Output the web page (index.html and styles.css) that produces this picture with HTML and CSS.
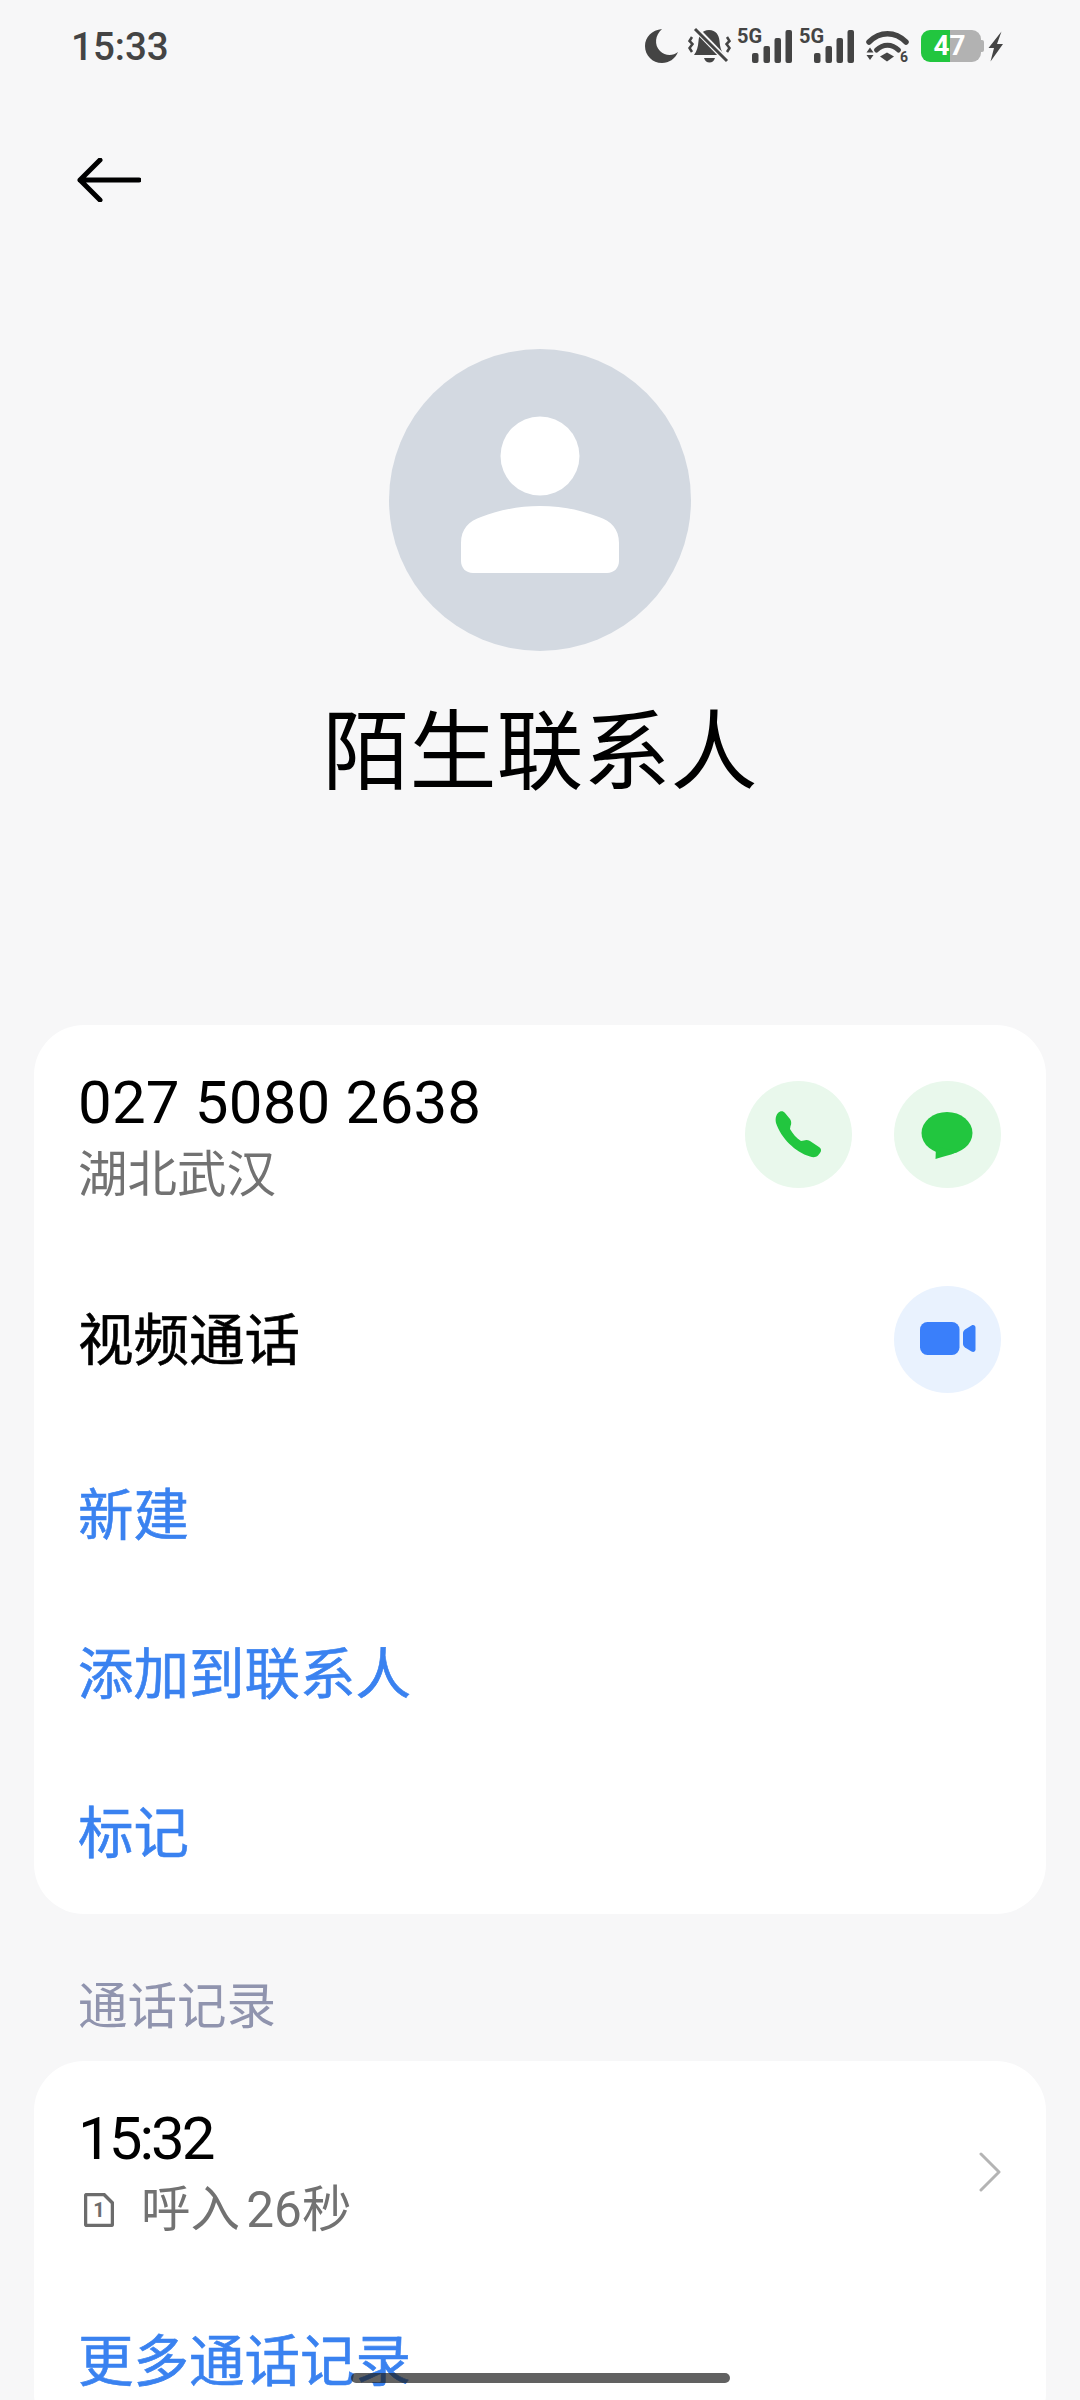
FILE: index.html
```html
<!DOCTYPE html>
<html lang="zh-CN">
<head>
  <meta charset="UTF-8">
  <title>陌生联系人</title>
  <link rel="stylesheet" href="styles.css">
</head>
<body>

<!-- Status bar -->
<header class="status-bar">
  <span class="status-time">15:33</span>
  <div class="status-icons">
    <svg class="icon-moon" viewBox="0 0 33 34"><path d="M17 0 C10 6 9 16 15 22 C20 27 28 27 33 23 C30 30 24 34 17 34 C7.500 34 0 26.500 0 17 C0 8 7 1 17 0 Z" fill="#444"/></svg>
    <svg class="icon-bell" viewBox="0 0 44 40">
      <path d="M21 4 C28 4 31 9 31.500 15 C32 21 33 25 36 29 L6 29 C9 25 10 21 10.500 15 C11 9 14 4 21 4 Z" fill="#444"/>
      <path d="M16 32 L27 32 C26 35 24 36.500 21.500 36.500 C19 36.500 17 35 16 32 Z" fill="#444"/>
      <path d="M6 1 L39 35" stroke="#f7f7f8" stroke-width="6"/>
      <path d="M7 3 L39 35" stroke="#444" stroke-width="3"/>
      <path d="M4 11 L1.500 15 L4.500 18 L1.500 22 L4 26 M39 11 L41.500 15 L38.500 18 L41.500 22 L39 26" fill="none" stroke="#444" stroke-width="2.500"/>
    </svg>
    <svg class="icon-signal" viewBox="0 0 54 36">
      <text class="signal-text" x="-1" y="15">5G</text>
      <rect x="14" y="25" width="6.500" height="10" rx="2" fill="#444"/>
      <rect x="25.500" y="18" width="6.500" height="17" rx="2" fill="#444"/>
      <rect x="36.500" y="10" width="6.500" height="25" rx="2" fill="#444"/>
      <rect x="47.500" y="2" width="6.500" height="33" rx="2" fill="#444"/>
    </svg>
    <svg class="icon-signal signal-second" viewBox="0 0 54 36">
      <text class="signal-text" x="-1" y="15">5G</text>
      <rect x="14" y="25" width="6.500" height="10" rx="2" fill="#444"/>
      <rect x="25.500" y="18" width="6.500" height="17" rx="2" fill="#444"/>
      <rect x="36.500" y="10" width="6.500" height="25" rx="2" fill="#444"/>
      <rect x="47.500" y="2" width="6.500" height="33" rx="2" fill="#444"/>
    </svg>
    <svg class="icon-wifi" viewBox="0 0 43 36">
      <path d="M3 14 C14 3 29 3 40 14" fill="none" stroke="#444" stroke-width="5.500" stroke-linecap="round"/>
      <path d="M10.500 22 C17 15.500 26 15.500 32.500 22" fill="none" stroke="#444" stroke-width="5" stroke-linecap="round"/>
      <path d="M14 28.500 L21 24.500 L28 28.500 L21 33.500 Z" fill="#444"/>
      <path d="M4 19.500 L7.500 24.500 L0.500 24.500 Z M0.500 27 L7.500 27 L4 32 Z" fill="#444"/>
      <text class="wifi-text" x="34" y="34">6</text>
    </svg>
    <div class="battery"><span>47</span></div>
    <svg class="icon-bolt" viewBox="0 0 15 31"><path d="M13.500 0.500 L0.500 17 L6 17 L2.500 30.500 L15 13 L9 13 Z" fill="#444"/></svg>
  </div>
</header>

<main>
  <!-- Back -->
  <div class="top-bar">
    <svg class="icon-back" viewBox="0 0 64 44">
      <path d="M62 22 L3 22 M23 2 L3 22 L23 42" fill="none" stroke="#000" stroke-width="5" stroke-linecap="round" stroke-linejoin="round"/>
    </svg>
  </div>

  <!-- Contact head -->
  <section class="contact-head">
    <svg class="avatar" viewBox="0 0 302 302">
      <circle cx="151" cy="151" r="151" fill="#d3d9e1"/>
      <circle cx="151" cy="107" r="39.500" fill="#fff"/>
      <path d="M72 194 C72 180 80 172 92 168 C110 161 130 157 151 157 C172 157 192 161 210 168 C222 172 230 180 230 194 L230 212 C230 219 225 224 218 224 L84 224 C77 224 72 219 72 212 Z" fill="#fff"/>
    </svg>
    <h1 class="contact-name">陌生联系人</h1>
  </section>

  <!-- Number and actions -->
  <section class="card card-main">
    <div class="row row-number">
      <div class="row-text">
        <div class="number">027 5080 2638</div>
        <div class="sub-text">湖北武汉</div>
      </div>
      <div class="row-actions">
        <span class="round-btn green">
          <svg class="icon-phone" viewBox="0 0 47 47"><path d="M3 2 C5 0 8 -0.500 10 2 L15 8 C16.500 10 16.500 13 15.500 15 L15 18 C18 23 21 27 26 30 L29 29.500 C31 28.500 33 29 35 30 L44 36 C46.500 37.500 46.500 40 45 42 L43 44.500 C41 46.500 38 46.500 35 45.500 C20 41 6 27 1 12 C0 8 1 4 3 2 Z" fill="#22c63f"/></svg>
        </span>
        <span class="round-btn green">
          <svg class="icon-message" viewBox="0 0 52 48"><ellipse cx="26" cy="21" rx="25.500" ry="21" fill="#22c63f"/><path d="M15 34 L14.500 47 C21 44.500 28 44 36 40 Z" fill="#22c63f"/></svg>
        </span>
      </div>
    </div>
    <div class="row row-video">
      <div class="row-title">视频通话</div>
      <span class="round-btn blue">
        <svg class="icon-video" viewBox="0 0 56 34">
          <rect x="0" y="0" width="39.500" height="33" rx="7.500" fill="#3a7ffa"/>
          <path d="M43 11 C43 9.500 44 8.500 45 7.500 L51.500 3.500 C53.500 2.500 55.500 3.500 55.500 5.500 L55.500 27.500 C55.500 29.500 53.500 30.500 51.500 29.500 L45 25.500 C44 24.500 43 23.500 43 22 Z" fill="#3a7ffa"/>
        </svg>
      </span>
    </div>
    <div class="row row-link"><span class="link">新建</span></div>
    <div class="row row-link"><span class="link">添加到联系人</span></div>
    <div class="row row-link row-last"><span class="link">标记</span></div>
  </section>

  <!-- Call log -->
  <h2 class="section-label">通话记录</h2>
  <section class="card card-log">
    <div class="row row-call">
      <div class="row-text">
        <div class="number call-time">15:32</div>
        <div class="call-info">
          <svg class="icon-sim" viewBox="0 0 30 34">
            <path d="M3 1.500 L20 1.500 L28.500 10 L28.500 30.500 C28.500 31.500 28 32.500 26.500 32.500 L3 32.500 C2 32.500 1.500 31.500 1.500 30.500 L1.500 3.500 C1.500 2.500 2 1.500 3 1.500 Z" fill="none" stroke="#6c6c6c" stroke-width="3.500"/>
            <text class="sim-text" x="15" y="24">1</text>
          </svg>
          <span class="sub-text call-text">呼入 26秒</span>
        </div>
      </div>
      <svg class="icon-chevron" viewBox="0 0 22 40"><path d="M2 2 L20 20 L2 38" fill="none" stroke="#b4b4b4" stroke-width="3" stroke-linecap="round" stroke-linejoin="round"/></svg>
    </div>
    <div class="row row-more"><span class="link">更多通话记录</span></div>
  </section>
</main>

<div class="home-bar"></div>

</body>
</html>
```

FILE: styles.css
```css
html, body {
  margin: 0;
  padding: 0;
}

body {
  position: relative;
  width: 1080px;
  height: 2400px;
  overflow: hidden;
  background-color: #f7f7f8;
  font-family: "Roboto", "Noto Sans CJK SC", sans-serif;
  color: #000;
}

/* Status bar */
.status-bar {
  display: flex;
  align-items: center;
  justify-content: space-between;
  height: 92px;
  padding: 0 77px 0 71px;
}

.status-time {
  font-size: 38.500px;
  font-weight: 500;
  color: #444;
}

.status-icons {
  display: flex;
  align-items: center;
}

.icon-moon {
  width: 33px;
  height: 34px;
}

.icon-bell {
  width: 44px;
  height: 40px;
  margin-left: 10px;
}

.icon-signal {
  width: 54px;
  height: 36px;
  margin-left: 6px;
  overflow: visible;
}

.signal-second {
  margin-left: 8px;
}

.signal-text {
  font-family: "Roboto", sans-serif;
  font-size: 20px;
  font-weight: 700;
  fill: #444;
}

.icon-wifi {
  width: 43px;
  height: 36px;
  margin-left: 12px;
}

.wifi-text {
  font-family: "Roboto", sans-serif;
  font-size: 14px;
  font-weight: 700;
  fill: #444;
}

.battery {
  position: relative;
  box-sizing: border-box;
  width: 60px;
  height: 32px;
  margin-left: 12px;
  padding-right: 3px;
  border-radius: 9px;
  background: linear-gradient(to right, #22c63f 0, #22c63f 29px, #b2b2b2 29px);
  text-align: center;
  font-size: 28px;
  font-weight: 700;
  line-height: 32px;
  color: #fff;
}

.battery::after {
  content: "";
  position: absolute;
  right: -3px;
  top: 10px;
  width: 3px;
  height: 12px;
  border-radius: 0 2px 2px 0;
  background-color: #b2b2b2;
}

.icon-bolt {
  width: 15px;
  height: 31px;
  margin-left: 7px;
}

/* Back */
.top-bar {
  display: flex;
  align-items: center;
  height: 176px;
  padding-left: 77px;
}

.icon-back {
  width: 64px;
  height: 44px;
}

/* Contact head */
.contact-head {
  display: flex;
  flex-direction: column;
  align-items: center;
  height: 757px;
}

.avatar {
  width: 302px;
  height: 302px;
  margin: 81px 1px 0 0;
}

.contact-name {
  margin: 42px 0 0;
  font-size: 87px;
  font-weight: 400;
  line-height: 120px;
}

/* Cards */
.card {
  margin: 0 34px;
  padding: 0 45px 0 44px;
  border-radius: 50px;
  background-color: #fff;
}

.row {
  display: flex;
  align-items: center;
  justify-content: space-between;
}

.row-number {
  height: 218px;
}

.row-number .row-text {
  padding-top: 7px;
}

.row-number .sub-text {
  margin-top: 4px;
}

.row-video {
  height: 192px;
}

.row-link {
  box-sizing: border-box;
  height: 159px;
  padding-bottom: 8px;
}

.row-last {
  height: 161px;
  padding-bottom: 10px;
}

.number {
  font-size: 60px;
  line-height: 70px;
  letter-spacing: 0.2px;
}

.call-time {
  letter-spacing: -3px;
}

.sub-text {
  font-size: 49.500px;
  line-height: 66px;
  color: #727272;
}

.row-actions {
  display: flex;
  gap: 42px;
}

.round-btn {
  display: flex;
  align-items: center;
  justify-content: center;
  width: 107px;
  height: 107px;
  border-radius: 50%;
}

.round-btn.green {
  background-color: #e9f8ec;
}

.round-btn.blue {
  background-color: #e9f2fe;
}

.icon-phone {
  width: 47px;
  height: 47px;
}

.icon-message {
  width: 52px;
  height: 48px;
  margin-top: 4px;
  margin-left: -2px;
}

.icon-video {
  width: 56px;
  height: 34px;
}

.row-title {
  margin-top: -6px;
  font-size: 55.500px;
  -webkit-text-stroke: 0.6px #000;
}

.link {
  font-size: 55.500px;
  color: #3a82f0;
  -webkit-text-stroke: 0.6px #3a82f0;
}

/* Call log */
.section-label {
  margin: 0;
  padding: 59px 0 20px 78px;
  font-size: 49.500px;
  font-weight: 400;
  line-height: 68px;
  color: #9094ae;
}

.row-call {
  height: 222px;
}

.row-call .row-text {
  padding-top: 3px;
}

.call-info {
  display: flex;
  align-items: center;
  gap: 27px;
  padding-top: 3px;
  padding-left: 6px;
}

.call-text {
  word-spacing: -6px;
}

.icon-sim {
  width: 30px;
  height: 34px;
}

.sim-text {
  font-family: "Roboto", sans-serif;
  font-size: 20px;
  font-weight: 700;
  fill: #6c6c6c;
  text-anchor: middle;
}

.icon-chevron {
  width: 22px;
  height: 40px;
}

.row-more {
  box-sizing: border-box;
  height: 160px;
  padding-bottom: 12px;
}

/* Gesture bar, over the page */
.home-bar {
  position: absolute;
  left: 351px;
  top: 2373px;
  width: 379px;
  height: 10px;
  border-radius: 5px;
  background-color: rgba(30, 30, 30, 0.7);
}
```
